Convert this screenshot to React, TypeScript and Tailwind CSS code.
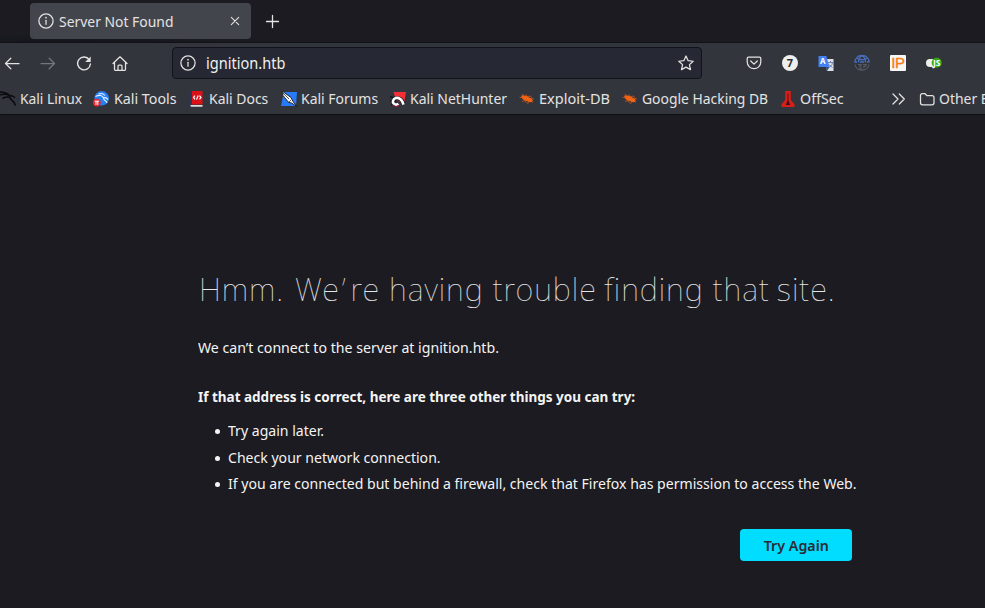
import type { ReactNode } from "react";

const stroke = {
  fill: "none",
  stroke: "currentColor",
  strokeWidth: 1.25,
  strokeLinecap: "round" as const,
  strokeLinejoin: "round" as const,
};

function Icon({ children, className = "" }: { children: ReactNode; className?: string }) {
  return (
    <svg viewBox="0 0 16 16" className={`size-4 shrink-0 ${className}`}>
      {children}
    </svg>
  );
}

function Info() {
  return (
    <Icon>
      <circle cx="8" cy="8" r="7.1" {...stroke} />
      <path d="M8 7.3v4" {...stroke} />
      <circle cx="8" cy="4.7" r=".85" fill="currentColor" />
    </Icon>
  );
}

function Dragon() {
  return (
    <Icon>
      <path d="M0 1C4 1 7 2 9.500 4.500c2.200-.3 4 .8 5.500 2.300M10 5c-1.500 4.500 4.500 3.500 5.300 9.500M9.500 4.500C7 3 4 3 0 3.800M2.500 7.500c2-1.500 4.200-1.800 6.500-1.300" fill="none" stroke="#090a0d" strokeWidth="1.600" />
    </Icon>
  );
}

function KaliTools() {
  return (
    <Icon>
      <circle cx="8.700" cy="7.300" r="7.200" fill="#267ff4" />
      <path d="M2.500 5.500c4-2 7-1 8 1.300 2.200-.5 3.800.5 4.600 2M10.500 6.800c-.4 3 3.100 2.200 3.500 5.200M5.500 3c3-1 5-.3 6.500 1.500" fill="none" stroke="#e7f2ff" strokeWidth="1.100" />
      <circle cx="3.800" cy="11.600" r="3.900" fill="#e7252e" />
      <path d="M1.700 10.200h4.400M3 10.400v3.500M4.800 10.400v3.500" stroke="#fff" strokeWidth="1" />
    </Icon>
  );
}

function KaliDocs() {
  return (
    <Icon>
      <path d="M1.500 1h2v14h-2z" fill="#29346d" />
      <path d="M3 0h10.500v13.500H3z" fill="#dc1018" />
      <path d="M1.500 14h12v1.700H2.500q-1 0-1-1z" fill="#d9dce0" />
      <path d="M6 4.700 4.500 6.500 6 8.300M10.500 4.700 12 6.500l-1.500 1.800M9.200 4.500 7.500 8.600" fill="none" stroke="#fff" strokeWidth="1.200" />
    </Icon>
  );
}

function KaliForums() {
  return (
    <Icon>
      <path d="M3 1h13l-1 14H0z" fill="#277bfa" />
      <path d="m1 0 9 6.500 2 4 4 5-5.500-3.500-3-.7L2 4.500Z" fill="#f7f8f7" stroke="#17191d" strokeWidth=".9" />
      <path d="m2 2 6 6M10 9l-2.500 2.500" stroke="#17191d" strokeWidth=".7" />
    </Icon>
  );
}

function NetHunter() {
  return (
    <Icon>
      <path d="M3.500 1H16l-2 12L6 9z" fill="#f42e37" />
      <path d="M0 5.500 4 7M0 10h3M1 14l3-2M6 15l2-3" stroke="#15171b" strokeWidth="1.600" />
      <path d="M4.500 12C2.500 8.500 5 6.700 8.500 7.500c2.500.7 4.500 2.500 5 6" fill="none" stroke="#15171b" strokeWidth="4" />
      <path d="M8.500 12.800C6 14.800 2.500 13 3 10c.7-3.200 4.200-4 7-2.200 2 1.200 2.800 3.200 3.500 5.800" fill="none" stroke="#fff" strokeWidth="2.600" />
      <path d="m3 14 3 1.500 3-1" fill="none" stroke="#a41639" strokeWidth="1" />
    </Icon>
  );
}

function Exploit() {
  return (
    <Icon>
      <path d="M3 2.800 5 5M7 3.500 8.500 6M.5 6.300 4 7M3 10.500 6 9.500M9 5.500l2.500-.5 1.500 2.500 2 .5M6 10l2 2.300 2-.8M12 10l2 1.500" fill="none" stroke="#b6541d" strokeWidth=".9" />
      <path d="M2 4.800c2.800-.7 6-.1 8.200 1.600 2 .2 3.500 1.700 3.500 3.700-.8 1.400-3.500 1.700-5.300.2C5.500 10.100 2.900 8.200 2 4.800Z" fill="#f06314" />
    </Icon>
  );
}

function OffSec() {
  return (
    <Icon>
      <path d="M5.200 0h5.600v9l3.700 4.200V16h-13v-2.800L5.200 9Z" fill="#d91d19" />
      <path d="M8 2.500v9" fill="none" stroke="#6d1014" strokeWidth="1.100" />
      <path d="M7.400 10h1.200l1.600 4H5.800z" fill="#35151a" />
    </Icon>
  );
}

const bookmarks = [
  { name: "Kali Linux", icon: <Dragon />, box: "w-[93px]", scale: "scale-x-[0.92]" },
  { name: "Kali Tools", icon: <KaliTools />, box: "w-[96px]", scale: "ml-[0.5px] scale-x-[0.95]" },
  { name: "Kali Docs", icon: <KaliDocs />, box: "w-[92px]", scale: "scale-x-[0.93]" },
  { name: "Kali Forums", icon: <KaliForums />, box: "w-[109px]", scale: "scale-x-[0.93]" },
  { name: "Kali NetHunter", icon: <NetHunter />, box: "w-[129px]", scale: "scale-x-[0.93]" },
  { name: "Exploit-DB", icon: <Exploit />, box: "w-[103px]", scale: "scale-x-[0.968]" },
  { name: "Google Hacking DB", icon: <Exploit />, box: "w-[158px]", scale: "scale-x-[0.926]" },
  { name: "OffSec", icon: <OffSec />, box: "w-[111px]", scale: "scale-x-[0.95]" },
];

function TabStrip() {
  return (
    <header className="flex h-[43px] items-start border-b border-[#111217] bg-[#1c1b22] pl-[30px] pt-[3px] bg-[radial-gradient(ellipse_at_9%_100%,#14161c_0%,#1c1b22_16%)]">
      <div className="flex h-9 w-[221px] items-center rounded bg-[#43454d] px-2">
        <Info />
        <span className="ml-[5px] flex-1 origin-left scale-x-[0.927] text-[15px]">Server Not Found</span>
        <svg viewBox="0 0 16 16" className="size-4">
          <path d="m4.300 4.300 7.400 7.400m0-7.400-7.400 7.400" {...stroke} strokeWidth="1.100" />
        </svg>
      </div>
      <svg viewBox="0 0 16 16" className="ml-[13px] mt-[10px] size-4">
        <path d="M8.500 2.500v12m-6-6h12" {...stroke} strokeWidth="1.300" />
      </svg>
    </header>
  );
}

function Toolbar() {
  return (
    <div className="flex h-10 items-center pl-1">
      <Icon><path d="M15 8.500H1.500m5.300-5.300L1.500 8.500l5.300 5.300" {...stroke} /></Icon>
      <Icon className="ml-5 text-[#75777d]"><path d="M1 8.500h13.500M9.200 3.200l5.300 5.300-5.300 5.300" {...stroke} /></Icon>
      <Icon className="ml-5">
        <path d="M13.300 4.800A6.400 6.400 0 1 0 14.400 9" {...stroke} strokeWidth="1.400" />
        <path d="M14.700 1.500V7H9.200Z" fill="currentColor" />
      </Icon>
      <Icon className="ml-[19.500px]">
        <path d="m1 8.500 7-6.700 7 6.700M2.500 7.500v7q0 .8.800.8h9.400q.8 0 .8-.8v-7M6 15v-4q0-1 1-1h2q1 0 1 1v4" {...stroke} />
      </Icon>
      <div className="ml-[44.500px] flex h-8 w-[530px] items-center rounded border border-[#12131a] bg-[#262833] px-[7px]">
        <Info />
        <span className="ml-[10px] flex-1 origin-left scale-x-[0.91] text-[16px] text-[#f0f0ef]">ignition.htb</span>
        <Icon><path d="m8 1 2.150 4.650 5.050.6-3.750 3.400 1.050 5L8 12.150 3.500 14.650l1.050-5L.8 6.250l5.050-.6Z" {...stroke} /></Icon>
      </div>
      <div className="ml-[44px] flex items-center gap-5">
        <Icon>
          <path d="M2.500 2.200h11q1.300 0 1.300 1.300v3.300c0 9-13.600 9-13.600 0V3.500q0-1.300 1.300-1.300ZM4.700 6 8 9.100 11.300 6" {...stroke} />
        </Icon>
        <div className="flex size-4 items-center justify-center rounded-full bg-[#eeeeec] text-[11px] font-bold text-[#292b31]">7</div>
        <Icon>
          <path d="M7 4h8.500v12H9Z" fill="#dce0e5" />
          <path d="M.5 1h7.800l3.200 11H.5Z" fill="#4381f0" />
          <path d="m8 12 1 4 2.500-4Z" fill="#234f99" />
          <text x="2.100" y="9.200" fontSize="8" fontWeight="700" fill="white" fontFamily="Noto Sans, sans-serif">A</text>
          <path d="M10 7.500h5M12.500 6v1.500M14.500 7.500c-.4 3-2 4-4 5m0-3 4 3" fill="none" stroke="#627cae" strokeWidth=".9" />
        </Icon>
        <Icon>
          <path d="M.8 7.500a7.200 7.200 0 0 1 14.400 0M3 3.500c3 1.500 7 1.500 10 0M4.500 7.500C4.500 4 6 1.500 8 .8c2 .7 3.500 3.200 3.500 6.700M1 7h2m3 0h4m3 0h2" fill="none" stroke="#496cbc" strokeWidth="1.300" />
          <path d="M1 9.500c1.500 7.500 12.500 7.500 14 0M4 9.500h3V11H5m4-1.500h3V11h-2v2M5 13h2v2" fill="none" stroke="#595d67" strokeWidth="1.100" />
        </Icon>
        <div className="flex size-4 items-center justify-center rounded-[1px] bg-[#f7f7f5] font-['Liberation_Sans',sans-serif] text-[15px] tracking-[-0.3px] text-[#f57d16] [-webkit-text-stroke:0.4px_#f57d16]">IP</div>
        <Icon>
          <rect x="0" y="4" width="14" height="8" rx="4" fill="#eeeeea" />
          <circle cx="10.700" cy="7.700" r="5" fill="#35a911" />
          <text x="7" y="10.900" fontSize="8" fontWeight="700" fill="#fff" fontFamily="Noto Sans, sans-serif" textLength="7.500" lengthAdjust="spacingAndGlyphs">JS</text>
        </Icon>
      </div>
    </div>
  );
}

function Bookmarks() {
  return (
    <nav className="flex h-[31px] items-center overflow-hidden text-[15px] whitespace-nowrap">
      {bookmarks.map((item) => (
        <div key={item.name} className={`flex h-full shrink-0 items-center gap-1 ${item.box}`}>
          {item.icon}
          <span className={`origin-left ${item.scale}`}>{item.name}</span>
        </div>
      ))}
      <Icon><path d="m2 3 5 5-5 5m6.300-10 5 5-5 5" {...stroke} /></Icon>
      <Icon className="ml-3"><path d="M1.500 4.500q0-2 2-2h2.300l2 2H13q2 0 2 2v5.300q0 2-2 2H3.500q-2 0-2-2Z" {...stroke} /></Icon>
      <span className="ml-1 shrink-0 origin-left scale-x-[0.93]">Other Bookmarks</span>
    </nav>
  );
}

const suggestions = [
  "Try again later.",
  "Check your network connection.",
  "If you are connected but behind a firewall, check that Firefox has permission to access the Web.",
];

export default function App() {
  return (
    <div className="h-[608px] w-[985px] overflow-hidden bg-[#1c1b22] font-['Noto_Sans',sans-serif] text-[#e3e3e1]">
      <TabStrip />
      <div className="h-[72px] border-b border-[#0d0e13] bg-[#33353d]">
        <Toolbar />
        <Bookmarks />
      </div>
      <main className="pl-[198px] pt-[151px] text-[15px] text-[#f4f4f3]">
        <h1 className="ml-px w-max origin-left scale-x-[0.965] whitespace-nowrap text-[32px] leading-[46px] font-thin tracking-[1px] text-[#e4e4e3]">
          Hmm. <span className="ml-[2px]">We</span>
          <span className="ml-[2px] mr-[4px]">’</span>re having trouble <span className="-ml-[1.5px]">finding</span> that{" "}
          <span className="-ml-[2px]">site.</span>
        </h1>
        <p className="mt-[23px] w-max origin-left scale-x-[0.942] leading-6">We can’t connect to the server at ignition.htb.</p>
        <p className="mt-[25px] w-max origin-left scale-x-[0.899] leading-6 font-bold">If that address is correct, here are three other things you can try:</p>
        <ul className="mt-[9px] whitespace-nowrap pl-[17px] leading-[26.500px]">
          {suggestions.map((item) => (
            <li key={item} className="flex items-center">
              <span className="mt-[3px] size-[5px] shrink-0 rounded-full bg-current" />
              <span className="ml-[8px] origin-left scale-x-[0.938]">{item}</span>
            </li>
          ))}
        </ul>
        <button className="ml-[542px] mt-[32px] flex h-8 w-28 items-center justify-center rounded bg-[#00ddff] text-[15px] font-semibold text-[#2b2a33]">
          <span className="mt-px scale-x-[0.95]">Try Again</span>
        </button>
      </main>
    </div>
  );
}
